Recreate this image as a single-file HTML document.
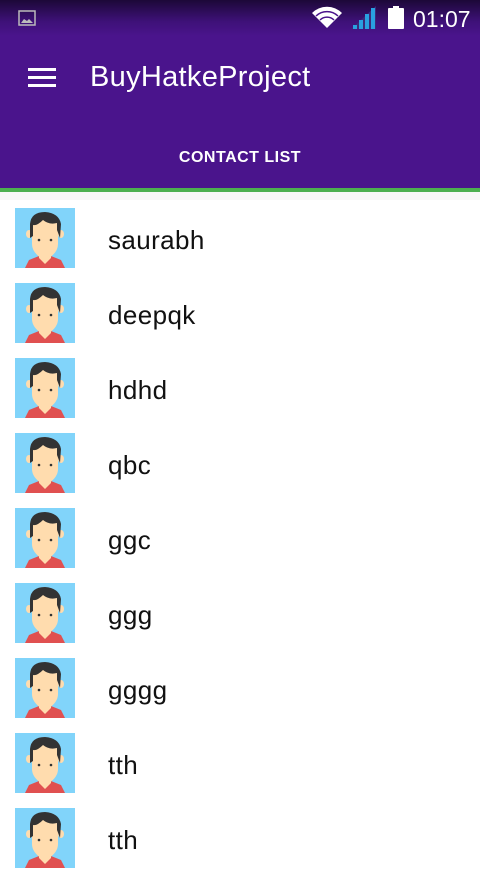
<!DOCTYPE html>
<html><head><style>
body{margin:0;width:480px;height:854px;overflow:hidden;background:#fff;font-family:"Liberation Sans",sans-serif;position:relative}
.hdr{position:absolute;left:0;top:0;width:480px;height:188px;background:#4a148c}
.sb{position:absolute;left:0;top:0;width:480px;height:36px;background:linear-gradient(#1c0838,#3e1178 60%,#4a148c)}
.green{position:absolute;left:0;top:188px;width:480px;height:4px;background:#4caf50}
.gray{position:absolute;left:0;top:192px;width:480px;height:8px;background:#f7f7f7}
.row{position:absolute;left:0;width:480px;height:75px}
.row svg{position:absolute;left:15px;top:0}
.row span{position:absolute;left:108px;top:17px;font-size:26px;letter-spacing:0.4px;color:#111}
</style></head><body>
<div class="hdr"></div><div class="sb"></div>
<svg style="position:absolute;left:18px;top:10px" width="18" height="16"><rect x="1" y="1" width="16" height="14" fill="none" stroke="#bbb" stroke-width="1.5"/><path d="M3 13 L6 9 L9 11 L11 9 L15 13Z" fill="#bbb"/></svg>
<svg style="position:absolute;left:312px;top:6px" width="30" height="22"><path d="M15 22 L0 7 A21 21 0 0 1 30 7Z" fill="#fff"/><path d="M4 10 A16 16 0 0 1 26 10" stroke="#4a148c" stroke-width="1.5" fill="none"/><path d="M8 14 A10 10 0 0 1 22 14" stroke="#4a148c" stroke-width="1.5" fill="none"/></svg>
<svg style="position:absolute;left:351px;top:6px" width="25" height="23"><path d="M0 23 L25 0 L25 23Z" fill="#3a2a7a"/><rect x="2" y="19" width="4" height="4" fill="#29a0e0"/><rect x="8" y="14" width="4" height="9" fill="#29a0e0"/><rect x="14" y="8" width="4" height="15" fill="#29a0e0"/><rect x="20" y="2" width="4" height="21" fill="#29a0e0"/></svg>
<svg style="position:absolute;left:388px;top:6px" width="16" height="23"><rect x="5" y="0" width="6" height="3" fill="#fff"/><rect x="0" y="2" width="16" height="21" rx="1" fill="#fff"/></svg>
<div style="position:absolute;left:413px;top:6px;font-size:23px;color:#fff">01:07</div>
<div style="position:absolute;left:28px;top:68px;width:28px;height:3px;background:#fff;box-shadow:0 8px 0 #fff,0 16px 0 #fff"></div>
<div style="position:absolute;left:90px;top:61px;font-size:29px;letter-spacing:0.3px;color:#fff">BuyHatkeProject</div>
<div style="position:absolute;left:0;width:480px;top:149px;text-align:center;font-size:16px;letter-spacing:0.5px;font-weight:bold;color:#fff">CONTACT LIST</div>
<div class="green"></div><div class="gray"></div>
<svg width="0" height="0" style="position:absolute"><defs><symbol id="av" viewBox="0 0 60 60"><rect width="60" height="60" fill="#81d4fa"/><path d="M10 60 L14 52 L24 48 L36 48 L46 52 L50 60Z" fill="#e05050"/><path d="M24 44 L24 50 L30 56 L36 50 L36 44Z" fill="#ffdcae"/><ellipse cx="14" cy="26" rx="3" ry="4" fill="#ffdcae"/><ellipse cx="46" cy="26" rx="3" ry="4" fill="#ffdcae"/><path d="M17 16 Q17 10 30 10 Q43 10 43 16 L43 36 Q43 44 34 50 L26 50 Q17 44 17 36Z" fill="#ffdcae"/><path d="M15 30 L15 16 Q16 4 30 4 Q44 5 46 16 L45 30 L42 22 L42 15 Q34 17 28 12 Q22 18 18 17 L18 28Z" fill="#333"/><circle cx="24" cy="32" r="1.3" fill="#333"/><circle cx="36" cy="32" r="1.3" fill="#333"/></symbol></defs></svg>
<div class="row" style="top:208px"><svg width="60" height="60"><use href="#av"/></svg><span>saurabh</span></div>
<div class="row" style="top:283px"><svg width="60" height="60"><use href="#av"/></svg><span>deepqk</span></div>
<div class="row" style="top:358px"><svg width="60" height="60"><use href="#av"/></svg><span>hdhd</span></div>
<div class="row" style="top:433px"><svg width="60" height="60"><use href="#av"/></svg><span>qbc</span></div>
<div class="row" style="top:508px"><svg width="60" height="60"><use href="#av"/></svg><span>ggc</span></div>
<div class="row" style="top:583px"><svg width="60" height="60"><use href="#av"/></svg><span>ggg</span></div>
<div class="row" style="top:658px"><svg width="60" height="60"><use href="#av"/></svg><span>gggg</span></div>
<div class="row" style="top:733px"><svg width="60" height="60"><use href="#av"/></svg><span>tth</span></div>
<div class="row" style="top:808px"><svg width="60" height="60"><use href="#av"/></svg><span>tth</span></div>
</body></html>
